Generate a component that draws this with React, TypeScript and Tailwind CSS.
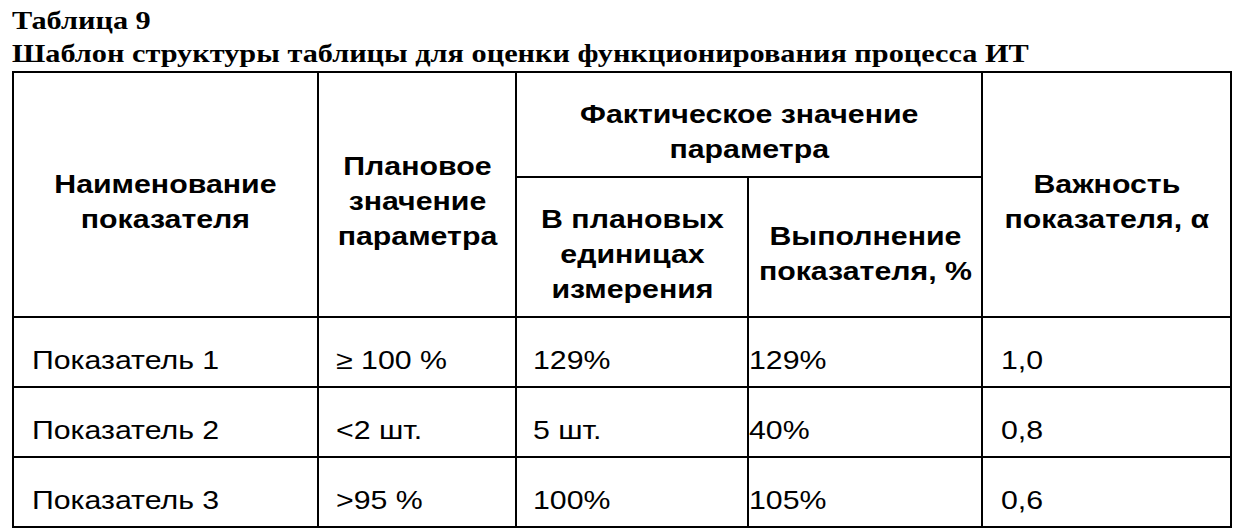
// the source scan is stretched horizontally, so text runs get a small scale-x
function Wide({ children, center }: { children: React.ReactNode; center?: boolean }) {
  return (
    <span className={`inline-block scale-x-[1.165] ${center ? 'origin-center' : 'origin-left'}`}>
      {children}
    </span>
  )
}

export default function App() {
  const head = 'border-2 border-black align-middle text-center font-bold text-[26px] leading-[35px] pt-[14px]'
  const cell = 'border-2 border-black align-middle text-[26px] leading-[30px] pt-[16px]'
  const rows = [
    ['Показатель 1', '≥ 100 %', '129%', '129%', '1,0'],
    ['Показатель 2', '<2 шт.', '5 шт.', '40%', '0,8'],
    ['Показатель 3', '>95 %', '100%', '105%', '0,6'],
  ]

  return (
    <div className="bg-white w-[1243px] h-[529px] pl-[12px] pt-[4px] text-black">
      <div className="font-['Liberation_Serif',serif] font-bold text-[26px] leading-[33px]">
        <div>
          <Wide>Таблица 9</Wide>
        </div>
        <div>
          <Wide>Шаблон структуры таблицы для оценки функционирования процесса ИТ</Wide>
        </div>
      </div>
      <table className="mt-[1px] w-[1218px] table-fixed border-collapse font-['Liberation_Sans',Arial,sans-serif]">
        <colgroup>
          <col className="w-[305px]" />
          <col className="w-[198px]" />
          <col className="w-[232px]" />
          <col className="w-[234px]" />
          <col className="w-[249px]" />
        </colgroup>
        <thead>
          <tr className="h-[105px]">
            <th rowSpan={2} className={head}>
              <Wide center>
                Наименование<br />показателя
              </Wide>
            </th>
            <th rowSpan={2} className={head}>
              <Wide center>
                Плановое<br />значение<br />параметра
              </Wide>
            </th>
            <th colSpan={2} className={head}>
              <Wide center>
                Фактическое значение<br />параметра
              </Wide>
            </th>
            <th rowSpan={2} className={head}>
              <Wide center>
                Важность<br />показателя, α
              </Wide>
            </th>
          </tr>
          <tr className="h-[140px]">
            <th className={head}>
              <Wide center>
                В плановых<br />единицах<br />измерения
              </Wide>
            </th>
            <th className={head}>
              <Wide center>
                Выполнение<br />показателя, %
              </Wide>
            </th>
          </tr>
        </thead>
        <tbody>
          {rows.map((r) => (
            <tr key={r[0]} className="h-[70px]">
              <td className={`${cell} pl-[18px]`}>
                <Wide>{r[0]}</Wide>
              </td>
              <td className={`${cell} pl-[17px]`}>
                <Wide>{r[1]}</Wide>
              </td>
              <td className={`${cell} pl-[16px]`}>
                <Wide>{r[2]}</Wide>
              </td>
              <td className={`${cell} pl-[0px]`}>
                <Wide>{r[3]}</Wide>
              </td>
              <td className={`${cell} pl-[18px]`}>
                <Wide>{r[4]}</Wide>
              </td>
            </tr>
          ))}
        </tbody>
      </table>
    </div>
  )
}
